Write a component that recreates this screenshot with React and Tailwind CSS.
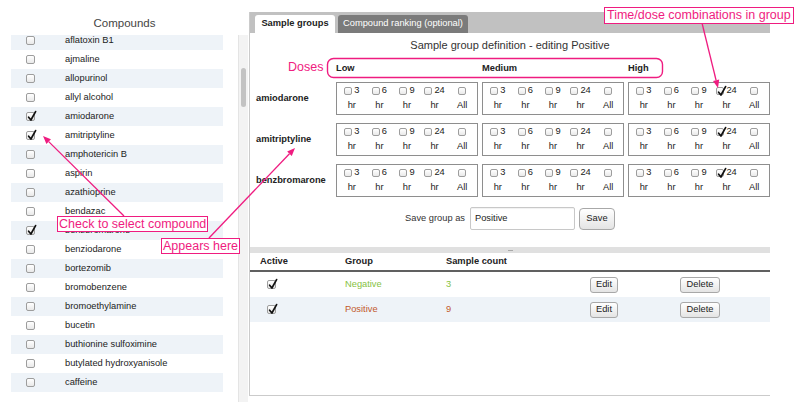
import React from 'react';

const compounds = [
  ['aflatoxin B1', false],
  ['ajmaline', false],
  ['allopurinol', false],
  ['allyl alcohol', false],
  ['amiodarone', true],
  ['amitriptyline', true],
  ['amphotericin B', false],
  ['aspirin', false],
  ['azathioprine', false],
  ['bendazac', false],
  ['benzbromarone', true],
  ['benziodarone', false],
  ['bortezomib', false],
  ['bromobenzene', false],
  ['bromoethylamine', false],
  ['bucetin', false],
  ['buthionine sulfoximine', false],
  ['butylated hydroxyanisole', false],
  ['caffeine', false],
];

const groupRows = ['amiodarone', 'amitriptyline', 'benzbromarone'];
const times = [['3', 'hr'], ['6', 'hr'], ['9', 'hr'], ['24', 'hr'], ['', 'All']];

const Check = ({ on, small }) => (
  <span
    className={`relative inline-block shrink-0 rounded-[2px] border border-[#9d9d9d] bg-gradient-to-b from-white to-[#e9e9e9] ${
      small ? 'w-[8px] h-[8px]' : 'w-[9px] h-[9px]'
    }`}
  >
    {on && (
      <svg viewBox="0 0 10 12" className="absolute left-[0px] top-[-3px] w-[10px] h-[12px] overflow-visible">
        <path d="M1.6 7.2 L3.9 10 L8.6 1.6" fill="none" stroke="#111" strokeWidth="1.7" strokeLinecap="round" strokeLinejoin="round" />
      </svg>
    )}
  </span>
);

const SmallBtn = ({ children, cls }) => (
  <span
    className={`flex items-center justify-center rounded-[3px] border border-[#a8a8a8] bg-gradient-to-b from-white to-[#e4e4e4] text-[#222] ${cls}`}
  >
    {children}
  </span>
);

const TimeBox = ({ checked }) => (
  <div className="h-[33px] border border-[#8e8e8e] grid grid-cols-5 px-[1px] pt-[2px]">
    {times.map(([t, b], i) => (
      <div key={i} className="flex flex-col items-center">
        <div className="h-[12px] flex items-center gap-[2px] leading-none">
          <Check small on={checked && i === 3} />
          {t && <span>{t}</span>}
        </div>
        <div className="h-[12px] mt-[2px] leading-[12px]">{b}</div>
      </div>
    ))}
  </div>
);

const arrow = (x1, y1, x2, y2) => {
  const a = Math.atan2(y2 - y1, x2 - x1);
  const L = 8;
  const W = 3.2;
  const bx = x2 - L * Math.cos(a);
  const by = y2 - L * Math.sin(a);
  const px = -Math.sin(a) * W;
  const py = Math.cos(a) * W;
  return (
    <g>
      <line x1={x1} y1={y1} x2={bx} y2={by} stroke="#ef1c80" strokeWidth="1.3" />
      <polygon points={`${x2},${y2} ${bx + px},${by + py} ${bx - px},${by - py}`} fill="#ef1c80" />
    </g>
  );
};

export default function App() {
  return (
    <div className="relative w-[800px] h-[402px] bg-white overflow-hidden flex font-['Liberation_Sans',Arial,sans-serif] text-[9.3px] text-[#222]">
      {/* Compounds list */}
      <div className="w-[249px] h-[402px] flex flex-col">
        <div className="h-[35px] pt-[17px] text-center text-[11.5px] leading-[13px] text-[#444]">Compounds</div>
        <div className="flex-1 flex overflow-hidden">
          <div className="w-[238px] pl-[11px] pr-[15px] overflow-hidden">
            <div className="-mt-[4px]">
              {compounds.map(([name, on], i) => (
                <div key={name} className={`h-[19px] flex items-center ${i % 2 === 0 ? 'bg-[#eef3f8]' : 'bg-white'}`}>
                  <div className="w-[54px] pl-[15px] flex items-center">
                    <Check on={on} />
                  </div>
                  <span>{name}</span>
                </div>
              ))}
            </div>
          </div>
          <div className="w-[10px] bg-[#f3f3f3] border-l border-[#e4e4e4] pt-[33px] flex justify-center">
            <div className="w-[5px] h-[39px] rounded-full bg-[#c3c3c3]" />
          </div>
        </div>
      </div>

      {/* Right panel */}
      <div className="w-[521px] h-[384px] mt-[12px] border-l border-b border-[#cbcbcb] flex flex-col">
        <div className="h-[21px] bg-[#c1c1c1] flex items-end pl-[5px] gap-[3px]">
          <div className="w-[80px] h-[18px] bg-white rounded-t-[3px] flex items-center justify-center font-bold">Sample groups</div>
          <div className="w-[130px] h-[18px] bg-[#7b7b7b] rounded-t-[3px] flex items-center justify-center text-white">
            Compound ranking (optional)
          </div>
        </div>

        <div className="mt-[6px] text-center text-[11px] leading-[13px] text-[#333]">Sample group definition - editing Positive</div>

        <div className="ml-[6px] mt-[10px] grid grid-cols-[76px_142px_142px_142px] gap-x-[4px] gap-y-[8px]">
          <div className="h-[12px]" />
          <div className="h-[12px] leading-[12px] font-bold">Low</div>
          <div className="h-[12px] leading-[12px] font-bold">Medium</div>
          <div className="h-[12px] leading-[12px] font-bold">High</div>
          {groupRows.map((r) => (
            <React.Fragment key={r}>
              <div className="flex items-center font-bold">{r}</div>
              <TimeBox />
              <TimeBox />
              <TimeBox checked />
            </React.Fragment>
          ))}
        </div>

        <div className="mt-[10px] flex items-center justify-center">
          <span className="text-[#333]">Save group as</span>
          <div className="ml-[5px] w-[105px] h-[23px] border border-[#c8c8c8] rounded-[2px] flex items-center px-[4px] shadow-[inset_0_1px_1px_rgba(0,0,0,0.06)]">
            Positive
          </div>
          <SmallBtn cls="ml-[4px] w-[36px] h-[22px] rounded-[4px]">Save</SmallBtn>
        </div>

        <div className="mt-[17px] h-[6px] bg-[#e0e0e0] flex items-center justify-center">
          <span className="w-[5px] h-[1px] bg-[#a9a9a9]" />
        </div>

        <div className="h-[19px] flex items-center font-bold border-b-2 border-[#606060]">
          <div className="w-[95px] pl-[10px]">Active</div>
          <div className="w-[101px]">Group</div>
          <div className="w-[110px]">Sample count</div>
        </div>
        {[
          ['Negative', '3', 'text-[#86c23f]', 'bg-white'],
          ['Positive', '9', 'text-[#c2592c]', 'bg-[#eef3f8]'],
        ].map(([g, n, c, bg]) => (
          <div key={g} className={`h-[25px] flex items-center ${bg}`}>
            <div className="w-[95px] pl-[17px] flex items-center">
              <Check on />
            </div>
            <div className={`w-[101px] ${c}`}>{g}</div>
            <div className={`w-[110px] ${c}`}>{n}</div>
            <div className="w-[96px] flex justify-center">
              <SmallBtn cls="w-[28px] h-[16px]">Edit</SmallBtn>
            </div>
            <div className="w-[96px] flex justify-center">
              <SmallBtn cls="w-[40px] h-[16px]">Delete</SmallBtn>
            </div>
          </div>
        ))}
      </div>

      {/* Annotations */}
      <svg className="absolute left-0 top-0 w-[800px] h-[402px] pointer-events-none" viewBox="0 0 800 402">
        <rect x="327.5" y="58.5" width="335" height="19" rx="6" fill="none" stroke="#ef1c80" strokeWidth="1.4" />
        {arrow(702, 23, 718, 88)}
        {arrow(124, 216, 43, 136)}
        {arrow(209, 238, 295, 148)}
      </svg>
      <div className="absolute left-[288px] top-[59px] text-[12.5px] leading-[16px] text-[#f0207f]">Doses</div>
      <div className="absolute left-[604px] top-[7px] h-[17px] px-[2px] border border-[#ef1c80] bg-white text-[12.5px] leading-[15px] text-[#ef1c80] whitespace-nowrap">
        Time/dose combinations in group
      </div>
      <div className="absolute left-[57px] top-[216px] h-[16px] px-[1px] border border-[#ef1c80] bg-white text-[12.5px] leading-[14px] text-[#ef1c80] whitespace-nowrap">
        Check to select compound
      </div>
      <div className="absolute left-[161px] top-[238px] h-[16px] px-[1px] border border-[#ef1c80] bg-white text-[12.5px] leading-[14px] text-[#ef1c80] whitespace-nowrap">
        Appears here
      </div>
    </div>
  );
}
